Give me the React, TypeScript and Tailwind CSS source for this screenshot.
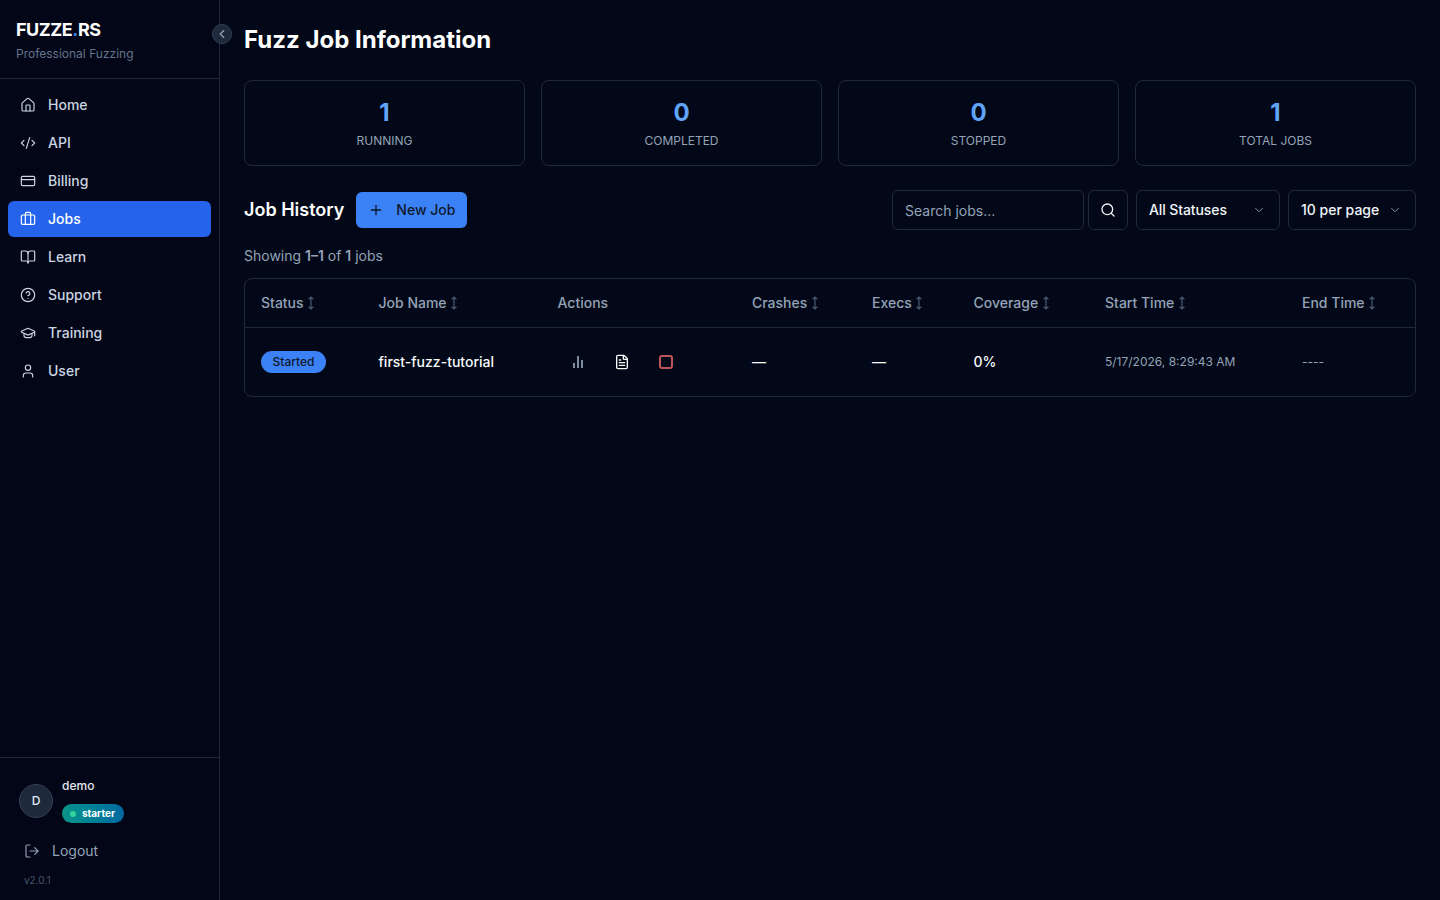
import { BookOpen, Briefcase, ChevronDown, ChevronLeft, CircleHelp, CodeXml, CreditCard, FileText, GraduationCap, House, LogOut, Plus, Search, User } from "lucide-react";

const nav = [
  { label: "Home", Icon: House },
  { label: "API", Icon: CodeXml },
  { label: "Billing", Icon: CreditCard },
  { label: "Jobs", Icon: Briefcase, active: true },
  { label: "Learn", Icon: BookOpen },
  { label: "Support", Icon: CircleHelp },
  { label: "Training", Icon: GraduationCap },
  { label: "User", Icon: User },
];

const stats = [
  { value: "1", label: "RUNNING" },
  { value: "0", label: "COMPLETED" },
  { value: "0", label: "STOPPED" },
  { value: "1", label: "TOTAL JOBS" },
];

function SortIcon() {
  return (
    <svg width="8" height="14" viewBox="0 0 8 14" fill="none" stroke="#4b5a70" strokeWidth="1.2" className="ml-[3.6px] mt-[1px] shrink-0">
      <path d="M4 1v12M1.6 3.4 4 1l2.4 2.4M1.6 10.6 4 13l2.4-2.4" />
    </svg>
  );
}

function Head({ label, sort = true, w }: { label: string; sort?: boolean; w: string }) {
  return (
    <th className={`${w} h-12 px-4 text-left text-sm font-medium text-[#94a3b8]`}>
      <span className="flex items-center">
        {label}
        {sort && <SortIcon />}
      </span>
    </th>
  );
}

function Select({ label, w, labelClass }: { label: string; w: string; labelClass?: string }) {
  return (
    <div className={`${w} flex h-10 items-center justify-between rounded-md border border-[#1e293b] pl-3 pr-[13px] text-sm font-medium text-[#f1f5f9]`}>
      <span className={labelClass}>{label}</span>
      <ChevronDown size={14} strokeWidth={1.5} className="text-[#94a3b8]" />
    </div>
  );
}

export default function App() {
  return (
    <div className="flex h-[900px] overflow-hidden bg-[#020817] font-['Inter',sans-serif] text-white">
      <aside className="relative flex w-[220px] shrink-0 flex-col border-r border-[#1e293b] bg-[#020617]">
        <div className="h-[79px] border-b border-[#1e293b] pl-4 pt-[18px]">
          <div className="text-lg font-bold leading-[24px] tracking-[-0.45px]">
            FUZZE<span className="text-[#3b82f6]">.</span>RS
          </div>
          <div className="mt-[2px] text-xs leading-[20px] text-[#64748b]">Professional Fuzzing</div>
        </div>
        <button className="absolute left-[212px] top-[24px] flex size-5 items-center justify-center rounded-full border border-[#334155] bg-[#1e293b] text-[#94a3b8]">
          <ChevronLeft size={14} />
        </button>
        <nav className="flex flex-1 flex-col gap-[2px] px-2 pt-[8px]">
          {nav.map(({ label, Icon, active }) => (
            <div
              key={label}
              className={`flex h-9 items-center gap-3 rounded-md px-3 text-sm font-medium ${active ? "bg-[#2563eb] text-white" : "text-[#cbd5e1]"}`}
            >
              <Icon size={16} strokeWidth={1.75} className="shrink-0" />
              {label}
            </div>
          ))}
        </nav>
        <div className="h-[143px] border-t border-[#1e293b] px-[19px] pt-[18px]">
          <div className="flex items-start gap-[9px]">
            <div className="mt-[8px] flex size-[34px] items-center justify-center rounded-full border border-[#334155] bg-[#1e293b] text-xs font-medium text-[#e2e8f0]">D</div>
            <div>
              <div className="text-xs font-medium leading-[20px] text-[#e2e8f0]">demo</div>
              <div className="mt-[8px] flex h-[19px] w-[62px] items-center gap-[6px] rounded-full bg-gradient-to-r from-[#0d9488] to-[#0369a1] pl-[8px] text-[10px] font-bold text-white">
                <span className="size-[6px] rounded-full bg-[#34d399]" />
                starter
              </div>
            </div>
          </div>
          <div className="ml-[5px] mt-[18px] flex h-5 items-center gap-[12px] text-sm text-[#94a3b8]">
            <LogOut size={16} strokeWidth={1.75} />
            Logout
          </div>
          <div className="ml-[5px] mt-[9px] text-[10px] leading-[20px] text-[#475569]">v2.0.1</div>
        </div>
      </aside>

      <main className="flex-1 px-6">
        <h1 className="mt-6 text-2xl font-bold leading-8">Fuzz Job Information</h1>
        <div className="mt-6 grid grid-cols-4 gap-4">
          {stats.map((s) => (
            <div key={s.label} className="flex h-[86px] flex-col items-center rounded-lg border border-[#1e293b] pt-4">
              <div className="text-2xl font-bold leading-8 text-[#60a5fa]">{s.value}</div>
              <div className="mt-1 text-xs leading-4 text-[#94a3b8]">{s.label}</div>
            </div>
          ))}
        </div>

        <div className="mt-6 flex h-10 items-center justify-between">
          <div className="flex items-center gap-3">
            <h2 className="text-lg font-semibold">Job History</h2>
            <button className="flex h-9 items-center gap-3 rounded-md bg-[#3b82f6] px-3 text-sm font-medium text-[#0f172a]">
              <Plus size={16} />
              New Job
            </button>
          </div>
          <div className="flex items-center">
            <div className="flex h-10 w-[192px] items-center rounded-md border border-[#1e293b] px-3 pt-[2px] text-sm text-[#94a3b8]">Search jobs...</div>
            <div className="ml-1 flex size-10 items-center justify-center rounded-md border border-[#1e293b]">
              <Search size={16} className="text-[#f1f5f9]" />
            </div>
            <div className="ml-2"><Select label="All Statuses" w="w-[144px]" labelClass="tracking-[-0.1px]" /></div>
            <div className="ml-2"><Select label="10 per page" w="w-[128px]" /></div>
          </div>
        </div>

        <div className="mt-4 text-sm leading-5 text-[#94a3b8]">
          Showing <span className="font-semibold">1–1</span> of <span className="font-semibold">1</span> jobs
        </div>

        <div className="mt-3 overflow-hidden rounded-lg border border-[#1e293b]">
          <table className="w-full table-fixed border-collapse">
            <thead>
              <tr className="border-b border-[#1e293b]">
                <Head label="Status" w="w-[117.5px]" />
                <Head label="Job Name" w="w-[179px]" />
                <Head label="Actions" sort={false} w="w-[194.5px]" />
                <Head label="Crashes" w="w-[120px]" />
                <Head label="Execs" w="w-[101.5px]" />
                <Head label="Coverage" w="w-[131.5px]" />
                <Head label="Start Time" w="w-[197px]" />
                <Head label="End Time" w="w-[129px]" />
              </tr>
            </thead>
            <tbody>
              <tr className="h-[69px] text-sm font-medium text-[#f8fafc]">
                <td className="px-4">
                  <span className="inline-flex h-[22px] w-[65px] items-center justify-center rounded-full bg-[#3b82f6] text-xs font-medium text-[#0f172a]">Started</span>
                </td>
                <td className="px-4 whitespace-nowrap">first-fuzz-tutorial</td>
                <td className="px-4">
                  <div className="flex items-center gap-7 pl-3">
                    <svg width="16" height="16" viewBox="0 0 16 16" fill="none" stroke="#94a3b8" strokeWidth="1.7"><path d="M4 14V9M8 14V2M12 14V6" /></svg>
                    <FileText size={16} strokeWidth={2} className="text-[#f8fafc]" />
                    <div className="ml-[1px] size-[14px] rounded-[3px] border-2 border-[#bd565b]" />
                  </div>
                </td>
                <td className="px-4">—</td>
                <td className="px-4">—</td>
                <td className="px-4">0%</td>
                <td className="px-4 text-xs font-normal text-[#94a3b8]">5/17/2026, 8:29:43 AM</td>
                <td className="px-4 text-xs font-normal text-[#94a3b8]">----</td>
              </tr>
            </tbody>
          </table>
        </div>
      </main>
    </div>
  );
}
